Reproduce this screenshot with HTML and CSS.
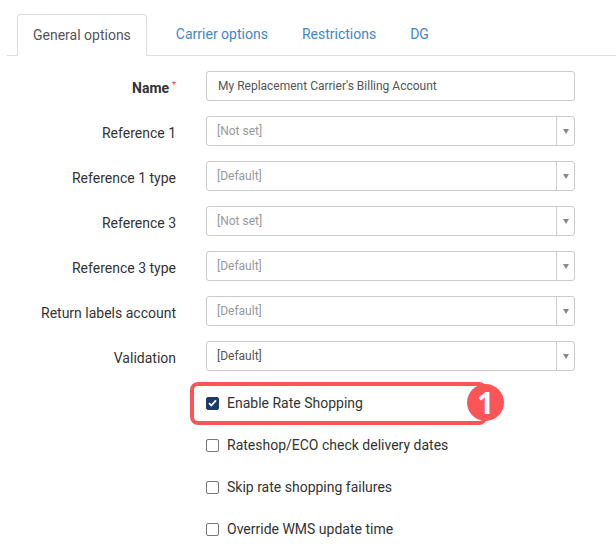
FILE: index.html
```html
<!DOCTYPE html>
<html lang="en">

<head>
  <meta charset="UTF-8">
  <meta name="viewport" content="width=device-width, initial-scale=1.0">
  <title>Carrier account</title>
  <link rel="stylesheet" href="styles.css">
</head>

<body>

  <ul class="tabs">
    <li class="tab active">General options</li>
    <li class="tab">Carrier options</li>
    <li class="tab">Restrictions</li>
    <li class="tab">DG</li>
  </ul>

  <div class="form">
    <div class="row">
      <label class="required">Name<span class="star">*</span></label>
      <div class="input">My Replacement Carrier's Billing Account</div>
    </div>

    <div class="row">
      <label>Reference 1</label>
      <div class="select placeholder">[Not set]</div>
    </div>

    <div class="row">
      <label>Reference 1 type</label>
      <div class="select placeholder">[Default]</div>
    </div>

    <div class="row">
      <label>Reference 3</label>
      <div class="select placeholder">[Not set]</div>
    </div>

    <div class="row">
      <label>Reference 3 type</label>
      <div class="select placeholder">[Default]</div>
    </div>

    <div class="row">
      <label>Return labels account</label>
      <div class="select placeholder">[Default]</div>
    </div>

    <div class="row">
      <label>Validation</label>
      <div class="select">[Default]</div>
    </div>
  </div>

  <div class="checks">
    <div class="check highlighted">
      <span class="box checked">
        <svg width="9" height="8" viewBox="0 0 9 8"><path d="M1 4.2l2.3 2.3L8 1.3" fill="none" stroke="#fff" stroke-width="1.8"/></svg>
      </span>
      Enable Rate Shopping
      <span class="callout"></span>
      <span class="badge">1</span>
    </div>
    <div class="check"><span class="box"></span>Rateshop/ECO check delivery dates</div>
    <div class="check"><span class="box"></span>Skip rate shopping failures</div>
    <div class="check"><span class="box"></span>Override WMS update time</div>
  </div>

</body>

</html>
```

FILE: styles.css
```css
body {
  margin: 0;
  font-family: Roboto, "Liberation Sans", Arial, sans-serif;
  font-size: 14px;
  color: #333;
  background: #fff;
}

.tabs {
  list-style: none;
  margin: 14px 0 0 7px;
  padding: 0 0 0 10px;
  display: flex;
  border-bottom: 1px solid #ddd;
}

.tab {
  height: 40px;
  line-height: 40px;
  padding: 0 17px;
  color: #3f86cc;
  cursor: pointer;
}

.tab.active {
  padding: 0 15px;
  margin-bottom: -1px;
  margin-right: 12px;
  color: #555;
  background: #fff;
  border: 1px solid #ddd;
  border-bottom-color: #fff;
  border-radius: 4px 4px 0 0;
}

.form {
  padding-top: 15px;
  display: flex;
  flex-direction: column;
  gap: 15px;
}

.row {
  display: grid;
  grid-template-columns: 176px 369px;
  column-gap: 30px;
  align-items: center;
}

.row label {
  padding-top: 3px;
  text-align: right;
  color: #333;
}

.row label.required {
  font-weight: bold;
}

.star {
  margin-left: 3px;
  color: #e23b3b;
  font-size: 9px;
  font-weight: normal;
  vertical-align: 5px;
}

.input,
.select {
  box-sizing: border-box;
  height: 30px;
  line-height: 28px;
  padding: 0 11px;
  border: 1px solid #ccc;
  border-radius: 3px;
  font-size: 12px;
  color: #555;
}

.select {
  position: relative;
  padding-left: 10px;
}

.select.placeholder {
  color: #999;
}

.select::before {
  content: "";
  position: absolute;
  top: 0;
  bottom: 0;
  right: 17px;
  border-left: 1px solid #ccc;
}

.select::after {
  content: "";
  position: absolute;
  right: 5px;
  top: 12px;
  border-left: 3px solid transparent;
  border-right: 3px solid transparent;
  border-top: 5px solid #888;
}

.checks {
  padding: 11px 0 0 206px;
}

.check {
  height: 42px;
  display: flex;
  align-items: center;
  color: #333;
}

.box {
  box-sizing: border-box;
  width: 13px;
  height: 13px;
  margin-right: 8px;
  border: 1px solid #777;
  border-radius: 2px;
  display: flex;
  align-items: center;
  justify-content: center;
}

.box.checked {
  background: #1d3a6c;
  border-color: #1d3a6c;
}

.highlighted {
  position: relative;
}

.callout {
  position: absolute;
  left: -16px;
  top: 0;
  width: 297px;
  height: 43px;
  box-sizing: border-box;
  border: 4px solid #fb5557;
  border-radius: 8px;
}

.badge {
  position: absolute;
  left: 261px;
  top: 2px;
  width: 37px;
  height: 37px;
  border-radius: 50%;
  background: #fb5557;
  color: #fff;
  font-family: "Open Sans", sans-serif;
  font-weight: bold;
  font-size: 30px;
  line-height: 37px;
  text-align: center;
}
```
